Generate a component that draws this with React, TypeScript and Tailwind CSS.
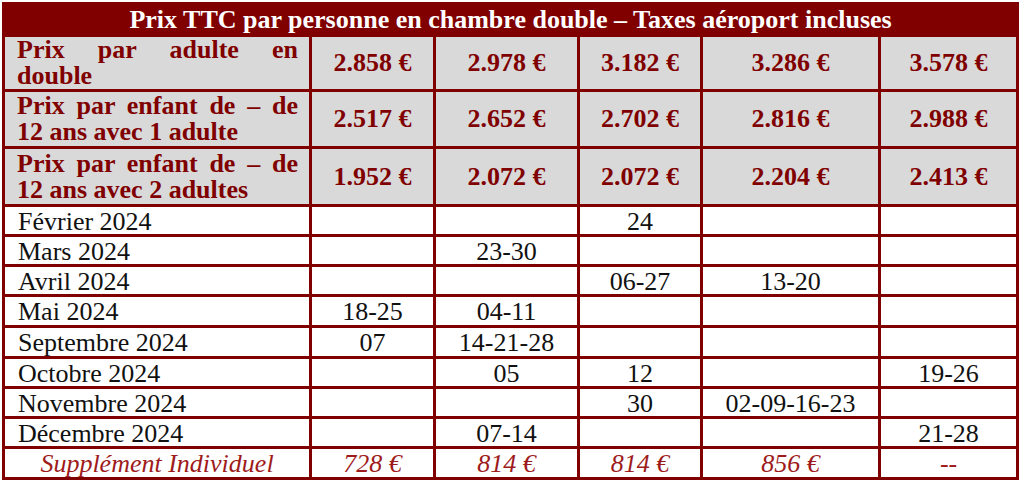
const priceRows = [
  {
    label: 'Prix par adulte en double',
    prices: ['2.858 €', '2.978 €', '3.182 €', '3.286 €', '3.578 €'],
    h: 'h-[55px]',
  },
  {
    label: 'Prix par enfant de – de 12 ans avec 1 adulte',
    prices: ['2.517 €', '2.652 €', '2.702 €', '2.816 €', '2.988 €'],
    h: 'h-[57px]',
  },
  {
    label: 'Prix par enfant de – de 12 ans avec 2 adultes',
    prices: ['1.952 €', '2.072 €', '2.072 €', '2.204 €', '2.413 €'],
    h: 'h-[58px]',
  },
]

const months: { name: string; dates: string[]; h: string }[] = [
  { name: 'Février 2024', dates: ['', '', '24', '', ''], h: 'h-[30px]' },
  { name: 'Mars 2024', dates: ['', '23-30', '', '', ''], h: 'h-[30px]' },
  { name: 'Avril 2024', dates: ['', '', '06-27', '13-20', ''], h: 'h-[30px]' },
  { name: 'Mai 2024', dates: ['18-25', '04-11', '', '', ''], h: 'h-[31px]' },
  { name: 'Septembre 2024', dates: ['07', '14-21-28', '', '', ''], h: 'h-[31px]' },
  { name: 'Octobre 2024', dates: ['', '05', '12', '', '19-26'], h: 'h-[30px]' },
  { name: 'Novembre 2024', dates: ['', '', '30', '02-09-16-23', ''], h: 'h-[30px]' },
  { name: 'Décembre 2024', dates: ['', '07-14', '', '', '21-28'], h: 'h-[30px]' },
]

const supplement = ['728 €', '814 €', '814 €', '856 €', '--']

const cell = 'border-[3px] border-[#800000] p-0'

export default function App() {
  return (
    <div className="h-[484px] w-[1024px] bg-white pl-[2px] pt-[2px] font-['Liberation_Serif',serif]">
      <table className="w-[1017px] table-fixed border-collapse">
        <colgroup>
          <col className="w-[307px]" />
          <col className="w-[124px]" />
          <col className="w-[144px]" />
          <col className="w-[123px]" />
          <col className="w-[178px]" />
          <col className="w-[138px]" />
        </colgroup>
        <tbody>
          <tr className="h-[32px]">
            <td
              colSpan={6}
              className={`${cell} bg-[#800000] text-center text-[26px] font-bold leading-[24px] text-white`}
            >
              Prix TTC par personne en chambre double – Taxes aéroport incluses
            </td>
          </tr>

          {priceRows.map((row) => (
            <tr key={row.label} className={`${row.h} bg-[#d9d9d9]`}>
              <td
                className={`${cell} pl-[12px] pr-[11px] text-justify align-middle text-[26px] font-bold leading-[26px] text-[#800000]`}
              >
                {row.label}
              </td>
              {row.prices.map((p, i) => (
                <td
                  key={i}
                  className={`${cell} text-center align-middle text-[26px] font-bold leading-[26px] text-[#800000]`}
                >
                  {p}
                </td>
              ))}
            </tr>
          ))}

          {months.map((m) => (
            <tr key={m.name} className={m.h}>
              <td className={`${cell} pl-[13px] pt-[2px] align-middle text-[26px] leading-[22px] text-[#111]`}>
                {m.name}
              </td>
              {m.dates.map((d, i) => (
                <td
                  key={i}
                  className={`${cell} pt-[2px] text-center align-middle text-[26px] leading-[22px] text-[#111]`}
                >
                  {d}
                </td>
              ))}
            </tr>
          ))}

          <tr className="h-[31px]">
            <td
              className={`${cell} pt-[2px] text-center align-middle text-[26px] italic leading-[22px] text-[#9e1b1b]`}
            >
              Supplément Individuel
            </td>
            {supplement.map((s, i) => (
              <td
                key={i}
                className={`${cell} pt-[2px] text-center align-middle text-[26px] italic leading-[22px] text-[#9e1b1b]`}
              >
                {s}
              </td>
            ))}
          </tr>
        </tbody>
      </table>
    </div>
  )
}
